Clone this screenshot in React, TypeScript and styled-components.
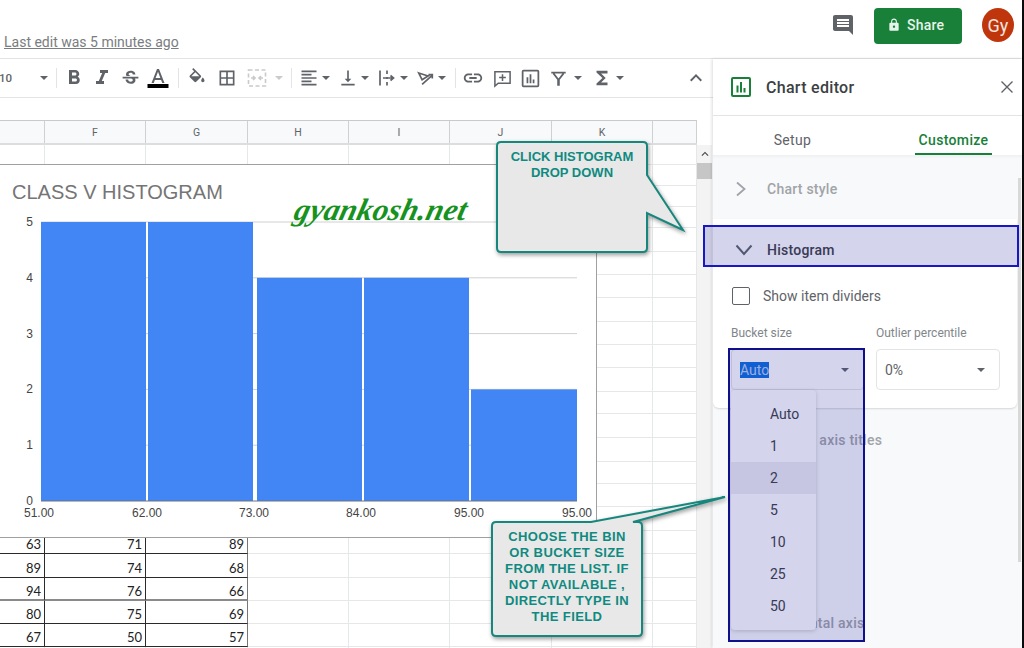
import React from "react";
import styled, { createGlobalStyle } from "styled-components";
import {
  MdComment, MdLock, MdFormatBold, MdFormatItalic, MdStrikethroughS, MdBorderAll,
  MdFormatAlignLeft, MdVerticalAlignBottom, MdLink, MdFunctions, MdKeyboardArrowUp,
} from "react-icons/md";

const Global = createGlobalStyle`
  html, body { margin: 0; padding: 0; background: #0a0a0a; overflow: hidden; }
  * { box-sizing: border-box; }
`;

const Page = styled.div`
  position: relative;
  width: 1022px;
  height: 648px;
  overflow: hidden;
  background: #fff;
  font-family: Roboto, "Liberation Sans", sans-serif;
  display: flex;
  flex-direction: column;
`;

/* ---------- top bar ---------- */
const Header = styled.header`
  height: 59px;
  flex: none;
  border-bottom: 1px solid #e3e4e5;
  display: flex;
  justify-content: space-between;
`;
const LastEdit = styled.a`
  margin: 32px 0 0 4px;
  height: 20px;
  font-size: 14px;
  line-height: 20px;
  color: #7a7d80;
  text-decoration: underline;
`;
const HeaderActions = styled.div`
  display: flex;
  align-items: flex-start;
  padding: 8px 8px 0 0;
`;
const CommentBtn = styled.span`
  display: flex;
  margin: 5px 19px 0 0;
  color: #5f6368;
`;
const ShareButton = styled.button`
  width: 88px;
  height: 36px;
  border: 0;
  border-radius: 4px;
  background: #188038;
  color: #e6f3ea;
  font: 500 14px Roboto, sans-serif;
  letter-spacing: 0.2px;
  display: flex;
  align-items: center;
  padding: 0 0 2px 13px;
  gap: 6px;
`;
const Avatar = styled.span`
  width: 32px;
  height: 34px;
  margin: 0 0 0 20px;
  border-radius: 50%;
  background: #bf360c;
  color: #f6e5df;
  font-size: 18px;
  display: flex;
  align-items: center;
  justify-content: center;
`;

/* ---------- body ---------- */
const Body = styled.div`
  flex: 1;
  display: flex;
  min-height: 0;
`;
const SheetColumn = styled.div`
  width: 713px;
  flex: none;
  display: flex;
  flex-direction: column;
`;
const Toolbar = styled.div`
  height: 39px;
  flex: none;
  border-bottom: 1px solid #e3e4e5;
  display: flex;
  align-items: center;
  color: #5f6368;
`;
const FontSize = styled.span`
  width: 38px;
  font-size: 11.5px;
  color: #5f6368;
  font-weight: 500;
  margin-left: -1px;
`;
const Tool = styled.span<{ $w: number; $ml?: number; $off?: boolean }>`
  width: ${(p) => p.$w}px;
  margin-left: ${(p) => p.$ml || 0}px;
  height: 24px;
  flex: none;
  display: flex;
  align-items: center;
  justify-content: center;
  color: ${(p) => (p.$off ? "#c8cacc" : "#5f6368")};
`;
const CaretShape = styled.i<{ $off?: boolean }>`
  width: 0;
  height: 0;
  border-left: 4px solid transparent;
  border-right: 4px solid transparent;
  border-top: 4px solid ${(p) => (p.$off ? "#c8cacc" : "#5f6368")};
`;
const ToolSep = styled.span<{ $ml: number; $mr: number }>`
  width: 1px;
  height: 20px;
  flex: none;
  margin: 0 ${(p) => p.$mr}px 0 ${(p) => p.$ml}px;
  background: #e3e4e5;
`;
const CollapseBtn = styled.span`
  margin-left: auto;
  margin-right: 5px;
  display: flex;
  color: #5f6368;
`;
const FormulaBar = styled.div`
  height: 22px;
  flex: none;
  background: #fff;
`;
const GridWrap = styled.div`
  flex: 1;
  display: flex;
  min-height: 0;
`;
const GridBody = styled.div`
  position: relative;
  width: 697px;
  flex: none;
  overflow: hidden;
`;
const COLS = "45px 101px 102px 101px 101px 102px 101px 44px";
const ColHead = styled.div`
  height: 25px;
  display: grid;
  grid-template-columns: ${COLS};
  background: #f8f9fa;
  border-top: 1px solid #c9cacb;
  border-bottom: 2px solid #dcdddf;
`;
const ColLabel = styled.span`
  border-right: 1px solid #cfd0d1;
  font-size: 10.5px;
  color: #5f6368;
  display: flex;
  align-items: center;
  justify-content: center;
`;
const Row = styled.div<{ $h: number }>`
  height: ${(p) => p.$h}px;
  display: grid;
  grid-template-columns: ${COLS};
`;
const Cell = styled.span<{ $data?: boolean; $thick?: boolean; $edge?: boolean }>`
  border-right: 1px solid ${(p) => (p.$edge ? "#777" : p.$data ? "#2a2a2a" : "#e6e7e8")};
  border-bottom: ${(p) => (p.$thick ? "2px solid #8a8a8a" : p.$data ? "1px solid #2a2a2a" : "1px solid #e6e7e8")};
  font: 13px Lato, "Open Sans", sans-serif;
  color: #222;
  display: flex;
  align-items: center;
  justify-content: flex-end;
  padding: 4px 3px 0 0;
`;
const VScroll = styled.div`
  width: 15px;
  margin-top: 25px;
  flex: none;
  background: #f3f3f3;
  color: #444;
  display: flex;
  flex-direction: column;
  align-items: center;
`;
const ScrollUp = styled.span`
  height: 18px;
  display: flex;
  align-items: center;
`;
const ScrollThumb = styled.span`
  width: 15px;
  height: 16px;
  background: #c6c6c6;
`;

/* ---------- floating chart ---------- */
const ChartCard = styled.div`
  position: absolute;
  left: 0;
  top: 44px;
  width: 597px;
  height: 374px;
  background: #fff;
  border-top: 1px solid #a0a0a0;
  border-right: 1px solid #a0a0a0;
  border-bottom: 1px solid #a0a0a0;
`;
const ChartTitle = styled.div`
  padding: 15px 0 0 12px;
  font: 20px/24px "Liberation Sans", Arial, sans-serif;
  color: #757575;
  height: 40px;
`;
const PlotSvg = styled.svg`
  display: block;
  font-family: "Liberation Sans", Arial, sans-serif;
  font-size: 12px;
`;
const Watermark = styled.div`
  position: absolute;
  left: 290px;
  top: 25px;
  font: italic 700 31px/40px "Liberation Serif", serif;
  color: #17921f;
  letter-spacing: 0.2px;
  transform: skewX(-14deg);
  transform-origin: left bottom;
`;

/* ---------- chart editor ---------- */
const Panel = styled.aside`
  flex: 1;
  min-width: 0;
  display: flex;
  flex-direction: column;
  background: #fff;
  box-shadow: -1px 0 3px rgba(0, 0, 0, 0.14);
  position: relative;
`;
const PanelHead = styled.div`
  height: 57px;
  flex: none;
  border-bottom: 1px solid #e3e4e5;
  display: flex;
  align-items: center;
  padding: 0 8px 0 16px;
  color: #188038;
`;
const PanelTitle = styled.h2`
  margin: 0 0 0 13px;
  font: 500 16px Roboto, sans-serif;
  letter-spacing: 0.3px;
  color: #3c4043;
  flex: 1;
`;
const CloseBtn = styled.span`
  display: flex;
  color: #5f6368;
`;
const Tabs = styled.div`
  height: 39px;
  flex: none;
  display: flex;
  gap: 84px;
  padding-left: 41px;
`;
const Tab = styled.span<{ $active?: boolean }>`
  width: 77px;
  padding-top: 14px;
  border-bottom: 2px solid ${(p) => (p.$active ? "#188038" : "transparent")};
  font: ${(p) => (p.$active ? 500 : 400)} 14px/20px Roboto, sans-serif;
  letter-spacing: 0.35px;
  text-align: center;
  color: ${(p) => (p.$active ? "#188038" : "#5f6368")};
`;
const ScrollArea = styled.div`
  flex: 1;
  min-height: 0;
  display: flex;
  background: #f8f9fa;
  box-shadow: inset 0 4px 4px -3px rgba(0, 0, 0, 0.06);
  overflow: hidden;
`;
const Sections = styled.div`
  width: 304px;
  flex: none;
  padding-top: 3px;
`;
const PanelBar = styled.span`
  width: 3px;
  height: 384px;
  margin: 23px 0 0 1px;
  background: #d8d8d8;
`;
const Section = styled.div<{ $open?: boolean }>`
  height: 61px;
  display: flex;
  align-items: center;
  padding-left: 54px;
  font: 500 14px Roboto, sans-serif;
  letter-spacing: 0.25px;
  color: ${(p) => (p.$open ? "#3c4043" : "#a0a4a9")};
  position: relative;
`;
const Chevron = styled.svg`
  position: absolute;
  left: 22px;
  top: 50%;
  transform: translateY(-50%);
`;
const Card = styled.div`
  background: #fff;
  border-radius: 0 0 6px 6px;
  box-shadow: 0 1px 2px rgba(0, 0, 0, 0.14);
  padding-bottom: 18px;
  margin-bottom: 1px;
`;
const CheckRow = styled.label`
  height: 32px;
  display: flex;
  align-items: center;
  gap: 13px;
  padding-left: 19px;
  font-size: 14px;
  color: #5f6368;
`;
const CheckBox = styled.span`
  width: 18px;
  height: 18px;
  border: 1.5px solid #5f6368;
  border-radius: 2px;
`;
const FieldGrid = styled.div`
  display: grid;
  grid-template-columns: 133px 124px;
  column-gap: 12px;
  padding: 13px 0 0 18px;
`;
const FieldLabel = styled.span`
  height: 24px;
  font-size: 12px;
  line-height: 16px;
  color: #80868b;
`;
const SelectBox = styled.div`
  height: 41px;
  border: 1px solid #e3e4e6;
  border-radius: 4px;
  background: #fff;
  display: flex;
  align-items: center;
  justify-content: space-between;
  padding: 0 14px 0 8px;
  font-size: 14px;
  color: #5f6368;
`;
const Selected = styled.span`
  background: #0b6ee0;
  color: #bcd0ec;
  line-height: 16px;
`;
const Menu = styled.ul`
  position: absolute;
  left: 731px;
  top: 390px;
  width: 85px;
  height: 240px;
  margin: 0;
  padding: 8px 0;
  list-style: none;
  background: #fff;
  border-radius: 4px;
  box-shadow: 0 1px 4px rgba(0, 0, 0, 0.18);
`;
const MenuItem = styled.li<{ $hover?: boolean }>`
  height: 32px;
  padding-left: 39px;
  font: 14px/32px Roboto, sans-serif;
  color: #3c4043;
  background: ${(p) => (p.$hover ? "#eeeef3" : "transparent")};
`;
const Highlight = styled.div<{ $l: number; $t: number; $w: number; $h: number; $c: string }>`
  position: absolute;
  left: ${(p) => p.$l}px;
  top: ${(p) => p.$t}px;
  width: ${(p) => p.$w}px;
  height: ${(p) => p.$h}px;
  border: 2px solid ${(p) => p.$c};
  background: rgba(40, 40, 160, 0.2);
`;

/* ---------- callouts ---------- */
const Callout = styled.div<{ $l: number; $t: number; $w: number; $h: number }>`
  position: absolute;
  left: ${(p) => p.$l}px;
  top: ${(p) => p.$t}px;
  width: ${(p) => p.$w}px;
  height: ${(p) => p.$h}px;
  padding-top: 7px;
`;
const CalloutShape = styled.svg`
  position: absolute;
  left: 0;
  top: 0;
  overflow: visible;
  filter: drop-shadow(1px 2px 2px rgba(0, 0, 0, 0.4));
`;
const CalloutText = styled.div<{ $ls: number }>`
  position: relative;
  font: 700 13px/16px "Liberation Sans", Arial, sans-serif;
  letter-spacing: ${(p) => p.$ls}px;
  color: #0e8a80;
  text-align: center;
`;

/* ---------- icons ---------- */
const Caret = ({ off }: { off?: boolean }) => (
  <Tool $w={10} $off={off}><CaretShape $off={off} /></Tool>
);
const ChartIcon = ({ size }: { size: number }) => (
  <svg width={size} height={size} viewBox="0 0 24 24" fill="none">
    <rect x="3" y="3" width="18" height="18" rx="1" stroke="currentColor" strokeWidth="2" />
    <path d="M7.5 10.5h2v7h-2zM11 7h2v10.5h-2zM14.5 13h2v4.500h-2z" fill="currentColor" />
  </svg>
);
const TextColorIcon = () => (
  <svg width="24" height="24" viewBox="0 0 24 24">
    <path fill="currentColor" d="M11 3L5.500 17h2.250l1.120-3h6.250l1.120 3h2.250L13 3h-2zm-1.380 9L12 5.670 14.380 12H9.620z" />
    <rect x="1.500" y="18" width="21" height="4" fill="#000" />
  </svg>
);
const FillIcon = () => (
  <svg width="20" height="20" viewBox="0 0 24 24">
    <path fill="currentColor" d="M16.560 8.940L7.620 0 6.210 1.410l2.380 2.380-5.150 5.150c-.59.59-.59 1.540 0 2.120l5.500 5.500c.29.290.68.440 1.060.440s.77-.15 1.060-.44l5.500-5.500c.59-.58.59-1.530 0-2.120zM5.210 10L10 5.210 14.790 10H5.210zM19 11.500s-2 2.170-2 3.500c0 1.100.9 2 2 2s2-.9 2-2c0-1.330-2-3.500-2-3.500z" />
  </svg>
);
const MergeIcon = () => (
  <svg width="20" height="20" viewBox="0 0 20 20" fill="none" stroke="currentColor" strokeWidth="1.600">
    <rect x="1.500" y="2" width="17" height="16" strokeDasharray="4 2.500" />
    <path d="M4 10h4M6 8l2 2-2 2M16 10h-4M14 8l-2 2 2 2" />
  </svg>
);
const WrapIcon = () => (
  <svg width="18" height="18" viewBox="0 0 18 18" fill="none" stroke="currentColor" strokeWidth="1.700">
    <path d="M2 1.500v15M9 1.500v3.500M9 8v2M9 13v3.500M5 9h10M12.500 6.500L15.500 9l-3 2.500" />
  </svg>
);
const RotateIcon = () => (
  <svg width="17" height="17" viewBox="0 0 20 20" fill="none" stroke="currentColor" strokeWidth="2">
    <path d="M2 3.500l11 3.500-7 4.500zM6 17L17.500 6.500M13.500 5.500h4.500v4.500" />
  </svg>
);
const AddCommentIcon = () => (
  <svg width="19" height="19" viewBox="0 0 20 20" fill="none" stroke="currentColor" strokeWidth="1.600">
    <path d="M2 3h16v12H5.500L2 18z" />
    <path d="M10 5.500v7M6.500 9h7" />
  </svg>
);
const FilterIcon = () => (
  <svg width="17" height="17" viewBox="0 0 20 20" fill="none" stroke="currentColor" strokeWidth="2">
    <path d="M1.500 3h17M4 4l5.500 7v6.500h1V11L16 4" />
  </svg>
);
const X = () => (
  <svg width="14" height="14" viewBox="0 0 14 14" stroke="currentColor" strokeWidth="1.400">
    <path d="M1.500 1.500l11 11M12.500 1.500l-11 11" />
  </svg>
);

/* ---------- data ---------- */
const HEIGHTS = [20, 21, 21, 21, 24, 23, 23, 24, 23, 23, 24, 22, 24, 24, 22, 23, 24, 23, 24, 23, 23, 23, 23];
const DATA: Record<number, string[]> = {
  17: ["63", "71", "89"],
  18: ["89", "74", "68"],
  19: ["94", "76", "66"],
  20: ["80", "75", "69"],
  21: ["67", "50", "57"],
};
const LETTERS = ["", "F", "G", "H", "I", "J", "K", ""];
const TOP = 205;
const yFor = (v: number) => 501 - v * 55.8 - TOP;
const BARS = [
  { x0: 41, x1: 146, v: 5 },
  { x0: 148, x1: 253, v: 5 },
  { x0: 257, x1: 362, v: 4 },
  { x0: 364, x1: 469, v: 4 },
  { x0: 471, x1: 577, v: 2 },
];
const XLABELS = [
  { x: 39, t: "51.00" },
  { x: 147, t: "62.00" },
  { x: 254, t: "73.00" },
  { x: 361, t: "84.00" },
  { x: 469, t: "95.00" },
  { x: 577, t: "95.00" },
];

export default function App() {
  return (
    <Page>
      <Global />
      <Header>
        <LastEdit>Last edit was 5 minutes ago</LastEdit>
        <HeaderActions>
          <CommentBtn><MdComment size={24} /></CommentBtn>
          <ShareButton><MdLock size={14} />Share</ShareButton>
          <Avatar>Gy</Avatar>
        </HeaderActions>
      </Header>
      <Body>
        <SheetColumn>
          <Toolbar>
            <FontSize>10</FontSize>
            <Tool $w={14}><CaretShape /></Tool>
            <ToolSep $ml={5} $mr={3} />
            <Tool $w={28}><MdFormatBold size={24} /></Tool>
            <Tool $w={28}><MdFormatItalic size={24} /></Tool>
            <Tool $w={28}><MdStrikethroughS size={21} /></Tool>
            <Tool $w={28}><TextColorIcon /></Tool>
            <ToolSep $ml={6} $mr={3} />
            <Tool $w={30}><FillIcon /></Tool>
            <Tool $w={30}><MdBorderAll size={20} /></Tool>
            <Tool $w={30} $off><MergeIcon /></Tool>
            <Tool $w={14}><CaretShape $off /></Tool>
            <ToolSep $ml={5} $mr={5} />
            <Tool $w={24}><MdFormatAlignLeft size={20} /></Tool>
            <Caret />
            <Tool $w={24} $ml={5}><MdVerticalAlignBottom size={20} /></Tool>
            <Caret />
            <Tool $w={24} $ml={5}><WrapIcon /></Tool>
            <Caret />
            <Tool $w={24} $ml={4}><RotateIcon /></Tool>
            <Caret />
            <ToolSep $ml={8} $mr={3} />
            <Tool $w={28}><MdLink size={22} /></Tool>
            <Tool $w={30}><AddCommentIcon /></Tool>
            <Tool $w={26}><ChartIcon size={21} /></Tool>
            <Tool $w={30}><FilterIcon /></Tool>
            <Caret />
            <Tool $w={24} $ml={7}><MdFunctions size={22} /></Tool>
            <Tool $w={10} $ml={1}><CaretShape /></Tool>
            <CollapseBtn><MdKeyboardArrowUp size={24} /></CollapseBtn>
          </Toolbar>
          <FormulaBar />
          <GridWrap>
            <GridBody>
              <ColHead>
                {LETTERS.map((l, i) => <ColLabel key={i}>{l}</ColLabel>)}
              </ColHead>
              {HEIGHTS.map((h, r) => (
                <Row key={r} $h={h}>
                  {LETTERS.map((_, c) => {
                    const d = DATA[r];
                    const inData = !!d && c < 3;
                    return (
                      <Cell key={c} $data={inData} $thick={inData && r === 19} $edge={inData && c === 2}>
                        {inData ? d[c] : ""}
                      </Cell>
                    );
                  })}
                </Row>
              ))}
              <ChartCard>
                <ChartTitle>CLASS V HISTOGRAM</ChartTitle>
                <PlotSvg width="596" height="332" viewBox="0 0 596 332">
                  {[1, 2, 3, 4, 5].map((v) => (
                    <line key={v} x1="41" x2="577" y1={yFor(v)} y2={yFor(v)} stroke="#d0d0d0" />
                  ))}
                  {BARS.map((b, i) => (
                    <rect key={i} x={b.x0} y={yFor(b.v)} width={b.x1 - b.x0} height={b.v * 55.8} fill="#4285f4" />
                  ))}
                  <line x1="41" x2="577" y1={yFor(0)} y2={yFor(0)} stroke="#6d7480" strokeWidth="1.200" />
                  {[0, 1, 2, 3, 4, 5].map((v) => (
                    <text key={v} x="33" y={yFor(v) + 4} textAnchor="end" fill="#444">{v}</text>
                  ))}
                  {XLABELS.map((l, i) => (
                    <text key={i} x={l.x} y="312" textAnchor="middle" fill="#444">{l.t}</text>
                  ))}
                </PlotSvg>
                <Watermark>gyankosh.net</Watermark>
              </ChartCard>
            </GridBody>
            <VScroll>
              <ScrollUp><MdKeyboardArrowUp size={14} /></ScrollUp>
              <ScrollThumb />
            </VScroll>
          </GridWrap>
        </SheetColumn>
        <Panel>
          <PanelHead>
            <ChartIcon size={24} />
            <PanelTitle>Chart editor</PanelTitle>
            <CloseBtn><X /></CloseBtn>
          </PanelHead>
          <Tabs>
            <Tab>Setup</Tab>
            <Tab $active>Customize</Tab>
          </Tabs>
          <ScrollArea>
            <Sections>
              <Section>
                <Chevron width="12" height="16" viewBox="0 0 12 16" fill="none" stroke="#a0a4a9" strokeWidth="1.800">
                  <path d="M2 1.500L9.500 8 2 14.500" />
                </Chevron>
                Chart style
              </Section>
              <Card>
                <Section $open>
                  <Chevron width="18" height="12" viewBox="0 0 18 12" fill="none" stroke="#5f6368" strokeWidth="2">
                    <path d="M1.500 1.500L9 10l7.500-8.500" />
                  </Chevron>
                  Histogram
                </Section>
                <CheckRow><CheckBox />Show item dividers</CheckRow>
                <FieldGrid>
                  <FieldLabel>Bucket size</FieldLabel>
                  <FieldLabel>Outlier percentile</FieldLabel>
                  <SelectBox><Selected>Auto</Selected><CaretShape /></SelectBox>
                  <SelectBox>0%<CaretShape /></SelectBox>
                </FieldGrid>
              </Card>
              <Section>Chart &amp; axis titles</Section>
              <Section />
              <Section />
              <Section>Horizontal axis</Section>
            </Sections>
            <PanelBar />
          </ScrollArea>
        </Panel>
      </Body>

      <Menu>
        {["Auto", "1", "2", "5", "10", "25", "50"].map((t) => (
          <MenuItem key={t} $hover={t === "2"}>{t}</MenuItem>
        ))}
      </Menu>
      <Highlight $l={703} $t={225} $w={316} $h={42} $c="#1717c8" />
      <Highlight $l={728} $t={348} $w={137} $h={294} $c="#10108a" />

      <Callout $l={497} $t={142} $w={150} $h={110}>
        <CalloutShape width="150" height="110">
          <path
            d="M4 0H146Q150 0 150 4V33L186 88L150 71V106Q150 110 146 110H4Q0 110 0 106V4Q0 0 4 0Z"
            fill="#e8e8e8" stroke="#17877d" strokeWidth="2"
          />
        </CalloutShape>
        <CalloutText $ls={0}>CLICK HISTOGRAM<br />DROP DOWN</CalloutText>
      </Callout>
      <Callout $l={492} $t={522} $w={150} $h={114}>
        <CalloutShape width="150" height="114">
          <path
            d="M4 0H99L233 -25L141 0H146Q150 0 150 4V110Q150 114 146 114H4Q0 114 0 110V4Q0 0 4 0Z"
            fill="#e8e8e8" stroke="#17877d" strokeWidth="2"
          />
        </CalloutShape>
        <CalloutText $ls={0.4}>
          CHOOSE THE BIN<br />OR BUCKET SIZE<br />FROM THE LIST. IF<br />NOT AVAILABLE ,<br />DIRECTLY TYPE IN<br />THE FIELD
        </CalloutText>
      </Callout>
    </Page>
  );
}
